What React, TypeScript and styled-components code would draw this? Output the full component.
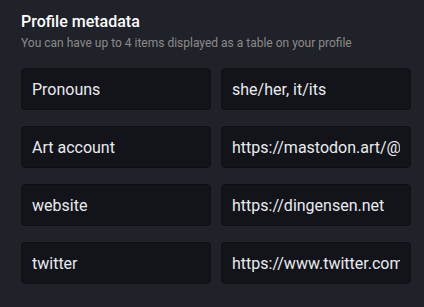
import styled, { createGlobalStyle } from "styled-components";

// ----------------------------------------------
//  global
// ----------------------------------------------
const GlobalStyle = createGlobalStyle`
  html, body {
    margin: 0;
    padding: 0;
    background: #1f2229;
  }
  body {
    font-family: Roboto, "Noto Sans", sans-serif;
  }
`;

// ----------------------------------------------
//  styled components
// ----------------------------------------------
const Section = styled.section`
  display: flex;
  flex-direction: column;
  width: 424px;
  height: 307px;
  box-sizing: border-box;
  padding: 12px 13px 0 21px;
  background: #1f2229;
`;

const Title = styled.h3`
  margin: 0;
  font-size: 16px;
  line-height: 20px;
  font-weight: 500;
  color: #ffffff;
`;

const Hint = styled.p`
  margin: 3px 0 0;
  font-size: 12px;
  line-height: 16px;
  color: #8d8b89;
`;

const Rows = styled.div`
  display: flex;
  flex-direction: column;
  gap: 16px;
  margin-top: 17px;
`;

const Row = styled.div`
  display: grid;
  grid-template-columns: 190px 190px;
  gap: 10px;
`;

const Field = styled.input`
  box-sizing: border-box;
  width: 100%;
  height: 42px;
  padding: 0 10px;
  border: 1px solid #0f1014;
  border-radius: 4px;
  background: #131419;
  color: #e8ebf0;
  font-family: Roboto, "Noto Sans", sans-serif;
  font-size: 16px;
  outline: none;
`;

// ----------------------------------------------
//  data
// ----------------------------------------------
const fields = [
  { name: "Pronouns", value: "she/her, it/its" },
  { name: "Art account", value: "https://mastodon.art/@dingen" },
  { name: "website", value: "https://dingensen.net" },
  { name: "twitter", value: "https://www.twitter.com/dingen" },
];

// ----------------------------------------------
//  function App()
// ----------------------------------------------
export default function App() {
  return (
    <>
      <GlobalStyle />
      <Section>
        <Title>Profile metadata</Title>
        <Hint>You can have up to 4 items displayed as a table on your profile</Hint>
        <Rows>
          {fields.map((f) => (
            <Row key={f.name}>
              <Field readOnly defaultValue={f.name} />
              <Field readOnly defaultValue={f.value} />
            </Row>
          ))}
        </Rows>
      </Section>
    </>
  );
}
